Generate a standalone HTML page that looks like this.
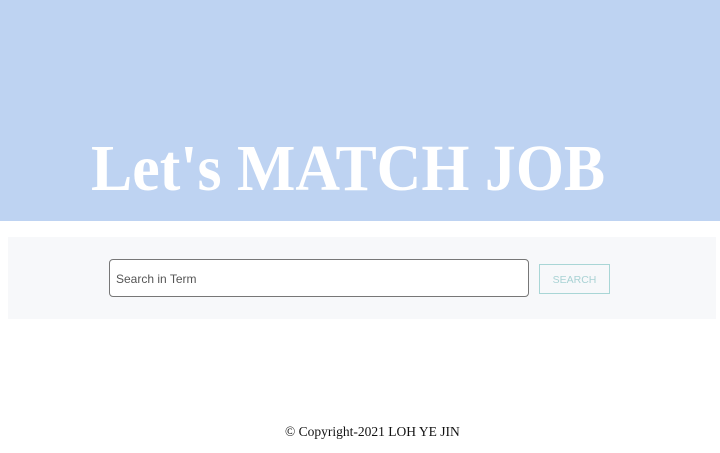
<!DOCTYPE html>
<html><head><meta charset="utf-8"><style>
html,body{margin:0;padding:0;width:720px;height:453px;background:#fff;overflow:hidden}
.banner{position:absolute;left:0;top:0;width:720px;height:221px;background:#bed3f2}
.title{position:absolute;left:91px;top:131px;font:bold 66px "Liberation Serif",serif;color:#fff;white-space:nowrap;transform:scaleX(0.937);transform-origin:0 0}
.panel{position:absolute;left:8px;top:237px;width:708px;height:82px;background:#f7f8fa}
.input{position:absolute;left:109px;top:259px;width:412px;height:36px;border:1px solid #777;border-radius:4px;background:#fff;font:12px "Liberation Sans",sans-serif;color:#555;line-height:38px;padding-left:6px;box-sizing:content-box}
.btn{position:absolute;left:539px;top:264px;width:69px;height:28px;border:1px solid #a9d6d6;font:10.5px "Liberation Sans",sans-serif;color:#a9d2d4;text-align:center;line-height:30px}
.foot{position:absolute;left:285px;top:424px;font:13.5px "Liberation Serif",serif;color:#111;white-space:nowrap}
</style></head><body>
<div class="banner"></div>
<div class="title">Let's MATCH JOB</div>
<div class="panel"></div>
<div class="input">Search in Term</div>
<div class="btn">SEARCH</div>
<div class="foot">© Copyright-2021 LOH YE JIN</div>
</body></html>
